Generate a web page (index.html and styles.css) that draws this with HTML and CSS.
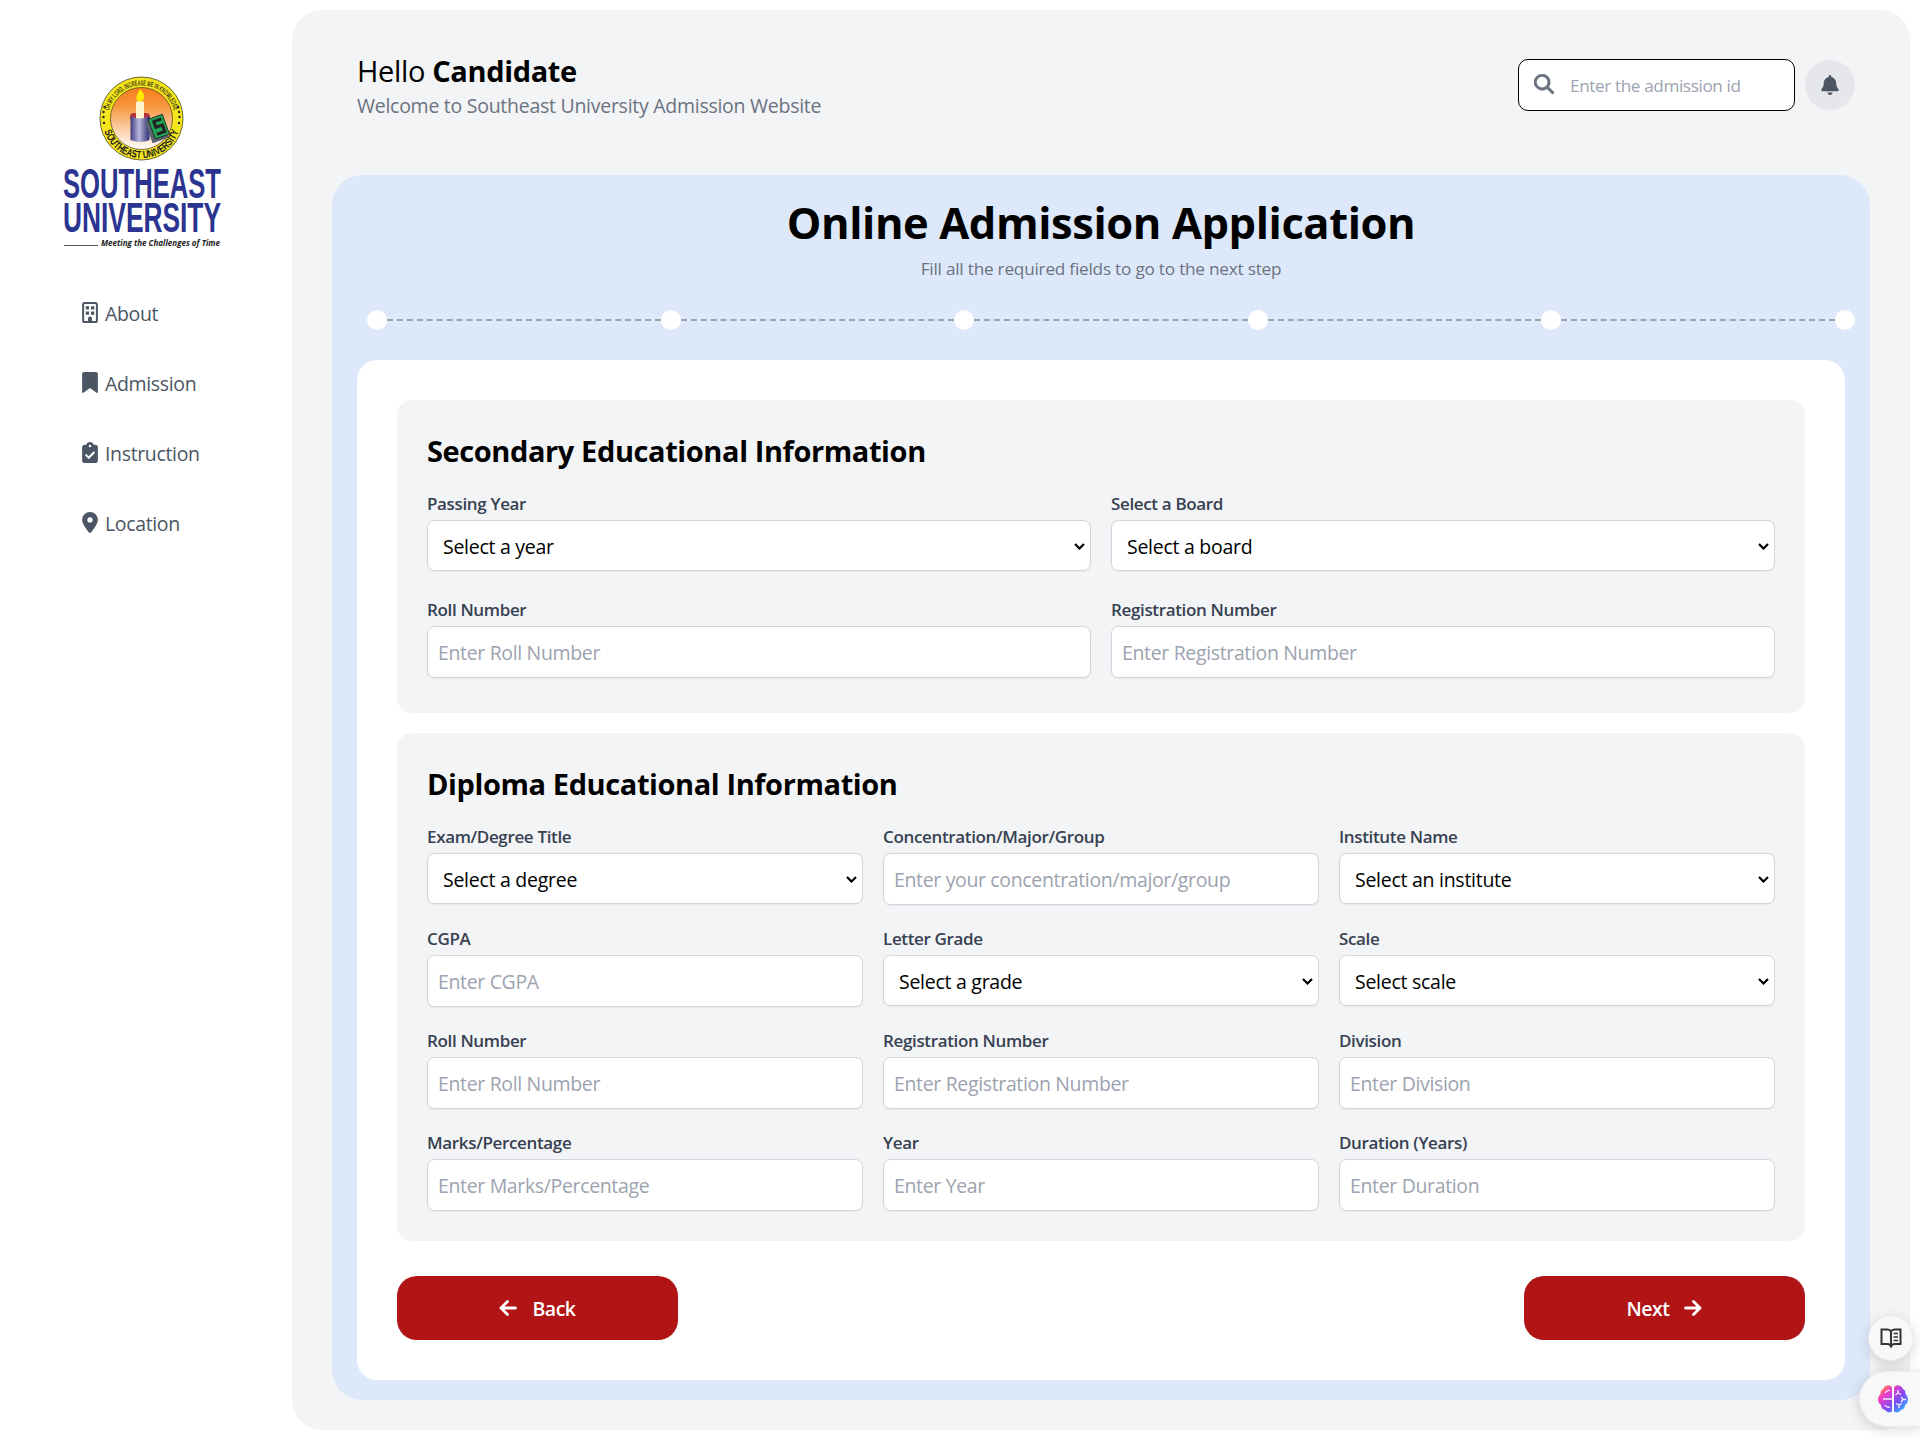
FILE: index.html
```html
<!DOCTYPE html>
<html lang="en">
<head>
<meta charset="utf-8">
<title>Online Admission Application</title>
<link rel="stylesheet" href="styles.css">
</head>
<body>
<div class="layout">
  <aside class="sidebar">
    <svg class="logo" viewBox="0 0 160 176" role="img" aria-label="Southeast University">
      <defs>
        <linearGradient id="sky" x1="0" y1="0" x2="0" y2="1"><stop offset="0" stop-color="#f47d1c"/><stop offset=".3" stop-color="#f7963f"/><stop offset="1" stop-color="#fff"/></linearGradient>
        <linearGradient id="cup" x1="0" x2="1"><stop offset="0" stop-color="#3d3a80"/><stop offset=".45" stop-color="#b9b8dd"/><stop offset="1" stop-color="#2f2c74"/></linearGradient>
        <path id="arc-top" d="M46 44A33.500 33.500 0 0 1 113 44"/>
        <path id="arc-bottom" d="M40.300 44A39.200 39.200 0 0 0 118.700 44"/>
      </defs>
      <g transform="translate(0 1)">
      <circle cx="79.500" cy="43.500" r="41.500" fill="#f5e51b" stroke="#6b6633" stroke-width="1"/>
      <circle cx="79.500" cy="43.500" r="31" fill="url(#sky)" stroke="#5a4a20" stroke-width=".8"/>
      <rect x="68" y="38" width="20" height="8" rx="4" fill="#b3313b"/>
      <path d="M74 27q4-2 8 0v20h-8z" fill="#fff3cf"/>
      <path d="M78 14q6 6 3.500 10.500-3.500 4-7 0-1-3 3.500-10.500z" fill="#ffe900"/>
      <path d="M68.500 41q9 5 19 0v24q-9 4-19 0z" fill="url(#cup)"/>
      <g transform="rotate(-20 95 54)"><rect x="86" y="44" width="17" height="22" fill="#5b6270"/><rect x="90" y="42" width="15" height="21" fill="#20a455" stroke="#222" stroke-width=".8"/><path d="M102.500 46h-8v6h7v7h-8.500" fill="none" stroke="#222" stroke-width="3"/></g>
      <text class="motto-arc"><textPath href="#arc-top" startOffset="50%" text-anchor="middle" textLength="88" lengthAdjust="spacingAndGlyphs">OH MY LORD, INCREASE ME IN KNOWLEDGE</textPath></text>
      <text class="name-arc"><textPath href="#arc-bottom" startOffset="50%" text-anchor="middle" textLength="98" lengthAdjust="spacingAndGlyphs">SOUTHEAST UNIVERSITY</textPath></text>
      <g fill="#222"><circle cx="42.500" cy="32" r="1.200"/><circle cx="41.500" cy="37" r="1.200"/><circle cx="41.500" cy="42" r="1.200"/><circle cx="42" cy="48" r="1.200"/><circle cx="116" cy="32" r="1.200"/><circle cx="117" cy="37" r="1.200"/><circle cx="117.500" cy="42" r="1.200"/><circle cx="117" cy="48" r="1.200"/></g>
      </g>
      <text class="wordmark" x="1" y="123.500" textLength="158" lengthAdjust="spacingAndGlyphs">SOUTHEAST</text>
      <text class="wordmark" x="1" y="157.500" textLength="158" lengthAdjust="spacingAndGlyphs">UNIVERSITY</text>
      <path d="M2 171.500h34" stroke="#555" stroke-width="1"/>
      <text class="tagline" x="39" y="172" textLength="119" lengthAdjust="spacingAndGlyphs">Meeting the Challenges of Time</text>
    </svg>
    <nav class="menu">
      <a class="menu-item"><svg viewBox="0 0 384 512"><path fill-rule="evenodd" d="M64 0h256a64 64 0 0 1 64 64v384a64 64 0 0 1-64 64H64a64 64 0 0 1-64-64V64A64 64 0 0 1 64 0zm0 48a16 16 0 0 0-16 16v384a16 16 0 0 0 16 16h80v-64a48 48 0 0 1 96 0v64h80a16 16 0 0 0 16-16V64a16 16 0 0 0-16-16zM88 104h80v80H88zM216 104h80v80h-80zM88 232h80v80H88zM216 232h80v80h-80z"/></svg><span>About</span></a>
      <a class="menu-item"><svg viewBox="0 0 384 512"><path d="M0 48v440c0 20 14 30 32 18l160-114 160 114c18 12 32 2 32-18V48c0-26-22-48-48-48H48C22 0 0 22 0 48z"/></svg><span>Admission</span></a>
      <a class="menu-item"><svg viewBox="0 0 384 512"><path fill-rule="evenodd" d="M192 0c-42 0-77 27-91 64H64c-35 0-64 29-64 64v320c0 35 29 64 64 64h256c35 0 64-29 64-64V128c0-35-29-64-64-64h-37C269 27 234 0 192 0zm0 64a32 32 0 1 1 0 64 32 32 0 1 1 0-64zm113 209L177 401c-9 9-25 9-34 0l-64-64c-22-23 11-56 34-34l47 47 111-111c23-22 56 11 34 34z"/></svg><span>Instruction</span></a>
      <a class="menu-item"><svg viewBox="0 0 384 512"><path fill-rule="evenodd" d="M216 499c51-64 168-219 168-307a192 192 0 1 0-384 0c0 88 117 243 168 307 12 16 36 16 48 0zM192 128a64 64 0 1 1 0 128 64 64 0 1 1 0-128z"/></svg><span>Location</span></a>
    </nav>
  </aside>

  <main class="panel">
    <header class="topbar">
      <div>
        <h2 class="hello">Hello <b>Candidate</b></h2>
        <p class="welcome">Welcome to Southeast University Admission Website</p>
      </div>
      <div class="tools">
        <label class="search">
          <svg viewBox="0 0 512 512"><path fill-rule="evenodd" d="M416 208c0 46-15 88-40 123l127 126c12 13 12 33 0 46-13 12-33 12-46 0L331 376A208 208 0 1 1 416 208zM208 352a144 144 0 1 0 0-288 144 144 0 1 0 0 288z"/></svg>
          <input placeholder="Enter the admission id">
        </label>
        <button class="bell" aria-label="Notifications"><svg viewBox="0 0 448 512"><path d="M224 0c-18 0-32 14-32 32v19C119 66 64 130 64 208v19c0 47-17 92-48 127l-8 9c-8 9-10 23-5 34s16 19 29 19h384c13 0 24-7 29-19s3-25-5-34l-8-9c-31-35-48-80-48-127v-19c0-78-55-142-128-157V32c0-18-14-32-32-32zm45 493c12-12 19-28 19-45H160c0 17 7 33 19 45s28 19 45 19 33-7 45-19z"/></svg></button>
      </div>
    </header>

    <section class="application">
      <h1>Online Admission Application</h1>
      <p class="hint">Fill all the required fields to go to the next step</p>
      <div class="steps"><i></i><hr><i></i><hr><i></i><hr><i></i><hr><i></i><hr><i></i></div>

      <form class="card">
        <fieldset class="group two">
          <h3>Secondary Educational Information</h3>
          <div class="grid">
            <label class="field"><span>Passing Year</span><div class="pick"><select><option>Select a year</option></select><svg viewBox="0 0 11 7"><path d="M1 1l4.500 4.500L10 1"/></svg></div></label>
            <label class="field"><span>Select a Board</span><div class="pick"><select><option>Select a board</option></select><svg viewBox="0 0 11 7"><path d="M1 1l4.500 4.500L10 1"/></svg></div></label>
            <label class="field"><span>Roll Number</span><input placeholder="Enter Roll Number"></label>
            <label class="field"><span>Registration Number</span><input placeholder="Enter Registration Number"></label>
          </div>
        </fieldset>
        <fieldset class="group three">
          <h3>Diploma Educational Information</h3>
          <div class="grid">
            <label class="field"><span>Exam/Degree Title</span><div class="pick"><select><option>Select a degree</option></select><svg viewBox="0 0 11 7"><path d="M1 1l4.500 4.500L10 1"/></svg></div></label>
            <label class="field"><span>Concentration/Major/Group</span><input placeholder="Enter your concentration/major/group"></label>
            <label class="field"><span>Institute Name</span><div class="pick"><select><option>Select an institute</option></select><svg viewBox="0 0 11 7"><path d="M1 1l4.500 4.500L10 1"/></svg></div></label>
            <label class="field"><span>CGPA</span><input placeholder="Enter CGPA"></label>
            <label class="field"><span>Letter Grade</span><div class="pick"><select><option>Select a grade</option></select><svg viewBox="0 0 11 7"><path d="M1 1l4.500 4.500L10 1"/></svg></div></label>
            <label class="field"><span>Scale</span><div class="pick"><select><option>Select scale</option></select><svg viewBox="0 0 11 7"><path d="M1 1l4.500 4.500L10 1"/></svg></div></label>
            <label class="field"><span>Roll Number</span><input placeholder="Enter Roll Number"></label>
            <label class="field"><span>Registration Number</span><input placeholder="Enter Registration Number"></label>
            <label class="field"><span>Division</span><input placeholder="Enter Division"></label>
            <label class="field"><span>Marks/Percentage</span><input placeholder="Enter Marks/Percentage"></label>
            <label class="field"><span>Year</span><input placeholder="Enter Year"></label>
            <label class="field"><span>Duration (Years)</span><input placeholder="Enter Duration"></label>
          </div>
        </fieldset>
        <div class="actions">
          <button type="button"><svg viewBox="0 0 18 16"><path d="M8.500 1.500L2 8l6.500 6.500M2 8h14.500"/></svg><span>Back</span></button>
          <button type="button"><span>Next</span><svg viewBox="0 0 18 16"><path d="M9.500 1.500L16 8l-6.500 6.500M16 8H1.500"/></svg></button>
        </div>
      </form>
    </section>
  </main>
</div>

<div class="reader"><svg viewBox="0 0 22 20"><path d="M11 3.500Q10 1.500 7.500 1.500H1.500v14.500h6Q10 16 11 18.500 12 16 14.500 16h6V1.500h-6Q12 1.500 11 3.500zV18" fill="none" stroke="#333" stroke-width="2"/><path d="M13.500 5.500h4.500M13.500 9h4.500M13.500 12.500h4.500" stroke="#333" stroke-width="1.600"/></svg></div>
<div class="brain"><svg viewBox="0 0 30 28"><defs><linearGradient id="mind" x1="0" y1="0" x2="1" y2="1"><stop offset=".05" stop-color="#ff9d1c"/><stop offset=".28" stop-color="#f03cc4"/><stop offset=".6" stop-color="#7a4df5"/><stop offset=".9" stop-color="#2fb0ff"/></linearGradient></defs>
<path fill="url(#mind)" d="M14 2.500Q12-.5 9 .5 6 1 5 4 2 5 2.500 9 0 11 0 14q0 4 3 6 0 4 4 5 3 4 7 1.500zM16 2.500Q18-.5 21 .5q3 .5 4 3.500 3 1 2.500 5 2.500 2 2.500 5 0 4-3 6 0 4-4 5-3 4-7 1.500z"/>
<path d="M5 14h9M7 8q2-3 5-2.500M7 20q2 3 5 2M20 5v3l-2.500 2M20 8l3 1.500M23 12l2 2.500h3M25 14.500L23 17M18 18.500l3 1.500v3M21 20l3-1.500" fill="none" stroke="#fbe6ff" stroke-width="1.300"/></svg></div>
</body>
</html>
```
FILE: styles.css
```css
* { box-sizing: border-box; }
body { margin: 0; background: #fff; color: #000; font: 20px/30px "Open Sans", "Noto Sans", sans-serif; overflow: hidden; }
h1, h2, h3, p { margin: 0; }
input, select, button { font: inherit; letter-spacing: inherit; margin: 0; }
.layout { display: flex; height: 1440px; padding: 10px 10px 10px 0; }
.sidebar { width: 292px; flex: none; padding: 64px 0 0 62px; }
.logo { display: block; width: 160px; height: 176px; overflow: visible; }
.motto-arc { font: 700 7.500px "Liberation Sans Narrow", "Liberation Sans", sans-serif; fill: #4b4514; }
.name-arc { font: 700 10.500px "Liberation Sans", sans-serif; fill: #222; }
.wordmark { font: 700 42px "Liberation Sans Narrow", "Liberation Sans", sans-serif; fill: #2b3490; }
.tagline { font: italic 700 9px "Open Sans", sans-serif; fill: #222; }
.menu { display: flex; flex-direction: column; gap: 40px; padding: 49px 0 0 20px; }
.menu-item { display: flex; align-items: center; gap: 7px; height: 30px; color: #4b5563; font-size: 19.500px; letter-spacing: -.35px; }
.menu-item svg { width: 16px; height: 21px; fill: #4b5563; position: relative; top: -2px; }

.panel { flex: 1; background: #f3f4f6; border-radius: 30px; padding: 40px 40px 30px; }
.topbar { display: flex; justify-content: space-between; height: 125px; padding: 0 15px 0 25px; }
.hello { font-size: 29px; font-weight: 400; line-height: 41px; padding-bottom: 2px; letter-spacing: -.35px; }
.welcome { font-size: 19.500px; line-height: 26px; color: #6b7280; letter-spacing: -.27px; }
.tools { display: flex; gap: 10px; padding-top: 9px; }
.search { display: flex; align-items: center; width: 277px; height: 52px; border: 1px solid #000; border-radius: 10px; background: #fff; padding: 0 15px; gap: 16px; }
.search svg { width: 20px; height: 20px; flex: none; fill: #6b7280; stroke: #6b7280; stroke-width: 14; position: relative; top: -1px; }
.search input { border: 0; outline: 0; padding: 2px 0 0; width: 200px; font-size: 17.200px; background: none; letter-spacing: -.4px; }
::placeholder { color: #9ca3af; opacity: 1; }
.bell { width: 50px; height: 50px; border: 0; border-radius: 50%; background: #e5e7eb; margin-top: 1px; display: grid; place-items: center; padding: 0; }
.bell svg { width: 18px; height: 20px; fill: #4b5563; }

.application { background: #dde9fa; border-radius: 30px; height: 1225px; padding: 20px 25px; text-align: center; }
h1 { font-size: 43.500px; line-height: 56px; font-weight: 700; letter-spacing: -.42px; }
.hint { font-size: 17.200px; line-height: 25px; padding-top: 5px; color: #6b7280; letter-spacing: -.22px; height: 34px; }
.steps { display: flex; align-items: center; height: 20px; margin: 25px -10px 30px 10px; }
.steps i { width: 20px; height: 20px; flex: none; border-radius: 50%; background: #fff; }
.steps hr { flex: 1; margin: 0; border: 0; border-top: 2px dashed #9ca3af; }
.card { background: #fff; border-radius: 20px; height: 1020px; padding: 40px; text-align: left; }
.group { border: 0; margin: 0; padding: 30px; background: #f3f4f6; border-radius: 15px; min-width: 0; }
.group.two { height: 313px; }
.group.three { height: 508px; margin-top: 20px; }
h3 { font-size: 29px; line-height: 40px; padding-top: 1px; margin-bottom: 19px; letter-spacing: -.4px; }
.grid { display: grid; column-gap: 20px; }
.two .grid { grid-template-columns: repeat(2, 1fr); grid-auto-rows: 106px; }
.three .grid { grid-template-columns: repeat(3, 1fr); grid-auto-rows: 102px; }
.field { display: block; }
.field > span { display: block; font-size: 17px; line-height: 25px; font-weight: 600; color: #374151; padding-top: 1px; margin-bottom: 4px; letter-spacing: -.35px; }
.field input, .field select { display: block; width: 100%; height: 52px; border: 1px solid #d1d5db; border-radius: 7.500px; background: #fff; padding: 0 10px; box-shadow: 0 1px 2px rgba(0,0,0,.06); font-size: 19.500px; letter-spacing: -.35px; color: #000; }
.field select { height: 51px; appearance: none; padding: 2px 10px 0 15px; letter-spacing: -.27px; }
.pick { display: grid; }
.pick > * { grid-area: 1 / 1; }
.pick svg { width: 11px; height: 7px; justify-self: end; align-self: center; margin: 1px 6px 0 0; fill: none; stroke: #000; stroke-width: 2.200; z-index: 1; }
.actions { display: flex; justify-content: space-between; margin-top: 35px; }
.actions button { width: 281px; height: 64px; border: 0; border-radius: 20px; background: #b11414; color: #fff; font-size: 19.500px; font-weight: 600; letter-spacing: -.5px; display: flex; align-items: center; justify-content: center; gap: 15px; padding: 2px 0 0; }
.actions svg { width: 18px; height: 16px; fill: none; stroke: #fff; stroke-width: 2.800; stroke-linecap: round; stroke-linejoin: round; position: relative; top: -1px; }

.reader { position: absolute; left: 1868px; top: 1315px; width: 46px; height: 46px; border-radius: 50%; background: #f8f8f9; border: 1px solid #e6e6ee; box-shadow: 0 4px 14px rgba(0,0,0,.14); display: grid; place-items: center; }
.reader svg { width: 22px; height: 20px; }
.brain { position: absolute; left: 1859px; top: 1371px; width: 61px; height: 56px; border-radius: 28px 0 0 28px; background: #f8f8f9; border: 1px solid #ececf0; border-right: 0; box-shadow: 0 2px 14px rgba(0,0,0,.16); display: flex; align-items: center; padding-left: 18px; }
.brain svg { width: 30px; height: 28px; }
```
